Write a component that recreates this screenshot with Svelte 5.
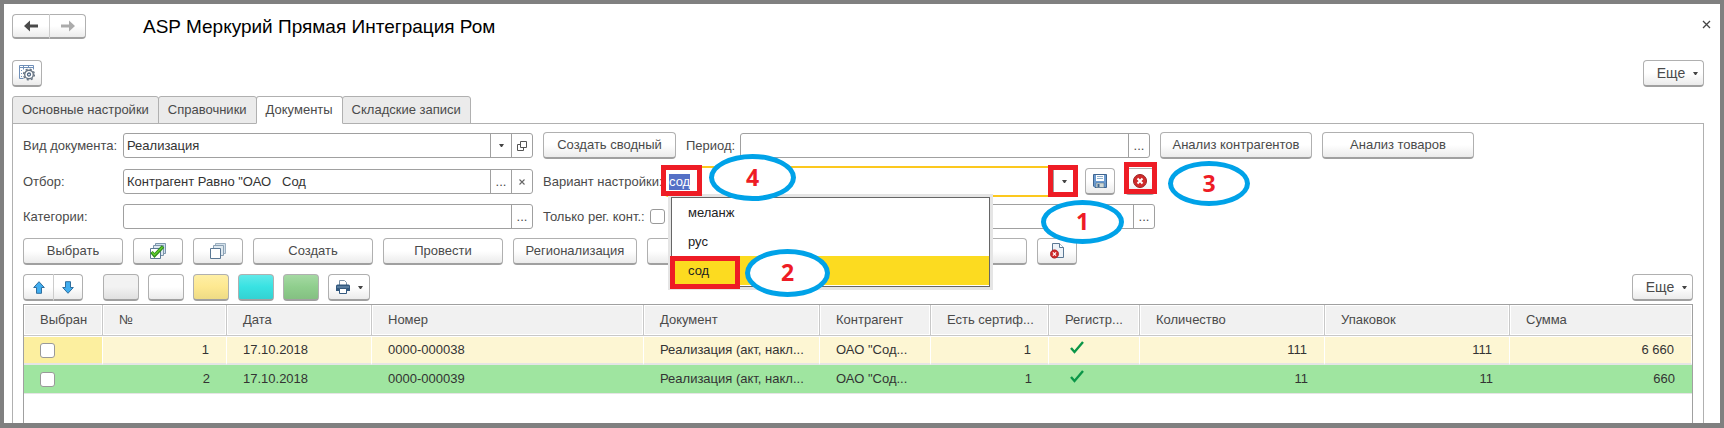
<script lang="ts">
  interface Row {
    no: number;
    date: string;
    number: string;
    doc: string;
    partner: string;
    certs: string;
    qty: string;
    packs: string;
    sum: string;
    color: string;
  }

  interface Mark {
    x: number;
    y: number;
    w: number;
    h: number;
    label?: string;
  }

  const tabs = ['Основные настройки', 'Справочники', 'Документы', 'Складские записи'];
  const variants = ['меланж', 'рус', 'сод'];
  const swatches = ['gray', 'white', 'yellow', 'cyan', 'green'];

  let activeTab = $state<string>('Документы');
  let docType = $state<string>('Реализация');
  let filter = $state<string>('Контрагент Равно "ОАО   Сод');
  let categories = $state<string>('');
  let period = $state<string>('');
  let variant = $state<string>('сод');
  let extra = $state<string>('');
  let popupOpen = $state<boolean>(true);
  let variantInput: HTMLInputElement;

  const rows: Row[] = [
    { no: 1, date: '17.10.2018', number: '0000-000038', doc: 'Реализация (акт, накл...', partner: 'ОАО "Сод...', certs: '1', qty: '111', packs: '111', sum: '6 660', color: 'pale' },
    { no: 2, date: '17.10.2018', number: '0000-000039', doc: 'Реализация (акт, накл...', partner: 'ОАО "Сод...', certs: '1', qty: '11', packs: '11', sum: '660', color: 'green' }
  ];

  // step marks drawn over the form, relative to its top left corner
  const boxes: Mark[] = [
    { x: 638, y: 33, w: 41, h: 31 },
    { x: 1025, y: 33, w: 30, h: 32 },
    { x: 1101, y: 30, w: 33, h: 32 },
    { x: 647, y: 124, w: 70, h: 33 }
  ];
  const bubbles: Mark[] = [
    { x: 1018, y: 68, w: 83, h: 44, label: '1' },
    { x: 722, y: 117, w: 85, h: 48, label: '2' },
    { x: 1145, y: 29, w: 82, h: 45, label: '3' },
    { x: 686, y: 22, w: 87, h: 47, label: '4' }
  ];

  function place(m: Mark): string {
    return `left:${m.x}px;top:${m.y}px;width:${m.w}px;height:${m.h}px`;
  }

  function pick(v: string): void {
    variant = v;
    popupOpen = false;
  }

  $effect(() => {
    variantInput?.focus();
    variantInput?.select();
  });
</script>

{#snippet caret()}
  <svg width="5" height="3" viewBox="0 0 5 3"><path d="M0 0h5L3 3H2z" fill="#444" /></svg>
{/snippet}

{#snippet cross()}
  <g>
    <circle cx="7" cy="7" r="6.5" fill="#cf2a2a" stroke="#9d2222" />
    <path d="M4.5 4.5l5 5M9.5 4.5l-5 5" stroke="#fff" stroke-width="2" />
  </g>
{/snippet}

<div class="window">
  <header class="top">
    <div class="pair">
      <button class="btn" aria-label="Назад">
        <svg width="14" height="12" viewBox="0 0 14 12"><path d="M0 6l6-5.5v4h8v3H6v4z" fill="#4a4a4a" /></svg>
      </button>
      <button class="btn" aria-label="Вперед">
        <svg width="14" height="12" viewBox="0 0 14 12"><path d="M14 6L8 .5v4H0v3h8v4z" fill="#ababab" /></svg>
      </button>
    </div>
    <h1>ASP Меркурий Прямая Интеграция Ром</h1>
    <button class="close" aria-label="Закрыть">
      <svg width="9" height="9" viewBox="0 0 9 9"><path d="M1 1l7 7M8 1L1 8" stroke="#444" stroke-width="1.3" /></svg>
    </button>
  </header>

  <div class="commands">
    <button class="btn icon" aria-label="Настройки">
      <svg width="16" height="16" viewBox="0 0 16 16" fill="none">
        <path d="M4.5 13.5h-4v-13h14v4M.5 2.5h14M4.5.5v4M9.5.5v2M2.5 5v1M2.5 8v1M2.5 11v1" stroke="#6f8fb8" />
        <circle cx="10" cy="9.5" r="4.3" stroke="#687583" stroke-width="1.4" fill="#fff" />
        <circle cx="10" cy="9.5" r="5.4" stroke="#687583" stroke-width="1.4" stroke-dasharray="2.12 2.12" />
        <circle cx="10" cy="9.5" r="1.5" stroke="#4f6682" stroke-width="1.3" />
      </svg>
    </button>
    <button class="btn more">Еще {@render caret()}</button>
  </div>

  <div class="tabs" role="tablist">
    {#each tabs as tab}
      <button class="tab" class:active={tab === activeTab} role="tab" aria-selected={tab === activeTab} onclick={() => (activeTab = tab)}>{tab}</button>
    {/each}
  </div>

  <main class="panel">
    <div class="form">
      <div class="line">
        <label class="first" for="doc-type">Вид документа:</label>
        <div class="field">
          <input id="doc-type" type="text" bind:value={docType} />
          <button aria-label="Выбрать из списка">{@render caret()}</button>
          <button aria-label="Открыть">
            <svg width="10" height="10" viewBox="0 0 10 10" fill="none" stroke="#555"><path d="M3.5 .5h6v6h-6zM3.5 3.5h-3v6h6v-3" /></svg>
          </button>
        </div>
        <button class="btn summary">Создать сводный</button>
        <label class="period" for="period">Период:</label>
        <div class="field">
          <input id="period" type="text" bind:value={period} />
          <button aria-label="Выбрать период">...</button>
        </div>
        <button class="btn analysis">Анализ контрагентов</button>
        <button class="btn analysis">Анализ товаров</button>
      </div>

      <div class="line">
        <label class="first" for="filter">Отбор:</label>
        <div class="field">
          <input id="filter" type="text" bind:value={filter} />
          <button aria-label="Выбрать отбор">...</button>
          <button aria-label="Очистить">
            <svg width="6" height="6" viewBox="0 0 6 6"><path d="M.5 .5l5 5M5.5 .5l-5 5" stroke="#666" stroke-width="1.1" /></svg>
          </button>
        </div>
        <label class="variant" for="variant">Вариант настройки:</label>
        <div class="field combo">
          <input id="variant" type="text" bind:value={variant} bind:this={variantInput} />
          <button aria-label="Показать варианты" onclick={() => (popupOpen = !popupOpen)}>{@render caret()}</button>
          {#if popupOpen}
            <div class="popup" role="listbox" aria-label="Варианты">
              {#each variants as v}
                <button class="option" class:selected={v === variant} role="option" aria-selected={v === variant} onclick={() => pick(v)}>{v}</button>
              {/each}
            </div>
          {/if}
        </div>
        <button class="btn icon" aria-label="Сохранить вариант">
          <svg width="14" height="14" viewBox="0 0 14 14">
            <path d="M.5 .5h13v13H2l-1.5-1.5z" fill="#6b9bd0" stroke="#3f6590" />
            <path d="M3 1h8v6H3z" fill="#fff" />
            <path d="M4 2.5h6M4 4.5h6" stroke="#8fb0cc" />
            <path d="M3 9h8v4.5H3z" fill="#cfd8d4" stroke="#4b6a87" stroke-width=".5" />
            <path d="M4.5 10h2v3h-2z" fill="#3f6590" />
          </svg>
        </button>
        <button class="btn icon" aria-label="Удалить вариант">
          <svg width="14" height="14" viewBox="0 0 14 14">{@render cross()}</svg>
        </button>
      </div>

      <div class="line short">
        <label class="first" for="categories">Категории:</label>
        <div class="field">
          <input id="categories" type="text" bind:value={categories} />
          <button aria-label="Выбрать категории">...</button>
        </div>
        <label class="registered" for="registered">Только рег. конт.:</label>
        <input id="registered" class="check" type="checkbox" />
        <div class="field extra">
          <input type="text" aria-label="Контрагент" bind:value={extra} />
          <button aria-label="Выбрать контрагента">...</button>
        </div>
      </div>

      <div class="marks">
        {#each boxes as box}
          <span class="box" style={place(box)}></span>
        {/each}
        {#each bubbles as bubble}
          <span class="bubble" style={place(bubble)}>{bubble.label}</span>
        {/each}
      </div>
    </div>

    <div class="actions">
      <button class="btn w100">Выбрать</button>
      <button class="btn w50" aria-label="Отметить все">
        <svg width="16" height="16" viewBox="0 0 16 16">
          <path d="M5.5 .5h10v10h-10z" fill="#cfe0ee" stroke="#7c95ab" />
          <path d="M3.5 2.5h10v10h-10z" fill="#dde8f1" stroke="#7c95ab" />
          <path d="M.5 5.5h10v10H.5z" fill="#fff" stroke="#5b7894" />
          <path d="M1.5 9l3 3.5L13 3.5" fill="none" stroke="#2e8b1e" stroke-width="3.4" />
          <path d="M2 9.3l2.5 2.7L12.5 4" fill="none" stroke="#63cf2c" stroke-width="1.4" />
        </svg>
      </button>
      <button class="btn w50" aria-label="Снять отметки">
        <svg width="16" height="16" viewBox="0 0 16 16">
          <path d="M5.5 .5h10v10h-10z" fill="#d3e0ea" stroke="#9db0c0" />
          <path d="M3.5 2.5h10v10h-10z" fill="#dfe9f0" stroke="#8ba1b4" />
          <path d="M.5 5.5h10v10H.5z" fill="#fff" stroke="#5b7894" />
        </svg>
      </button>
      <button class="btn w120">Создать</button>
      <button class="btn w120">Провести</button>
      <button class="btn regional">Регионализация</button>
      <button class="btn wide" aria-label="Обработать"></button>
      <button class="btn w40" aria-label="Удалить документ">
        <svg width="15" height="16" viewBox="0 0 15 16">
          <path d="M2.5 .5h7l4 4v10h-11z" fill="#eef3f8" stroke="#5b7894" />
          <path d="M9.5 .5v4h4" fill="#fff" stroke="#5b7894" />
          <g transform="translate(0 6.5) scale(.64)">{@render cross()}</g>
        </svg>
      </button>
    </div>

    <div class="toolbar">
      <div class="pair move">
        <button class="btn" aria-label="Вверх">
          <svg width="12" height="13" viewBox="0 0 12 13"><path d="M6 .7l5.3 5.8H8.5v5.8h-5V6.5H.7z" fill="#41aef0" stroke="#2f6f9f" /></svg>
        </button>
        <button class="btn" aria-label="Вниз">
          <svg width="12" height="13" viewBox="0 0 12 13"><path d="M6 12.3L.7 6.5h2.8V.7h5v5.8h2.8z" fill="#41aef0" stroke="#2f6f9f" /></svg>
        </button>
      </div>
      {#each swatches as color}
        <button class="btn swatch {color}" aria-label="Цвет"></button>
      {/each}
      <button class="btn print" aria-label="Печать">
        <svg width="14" height="14" viewBox="0 0 14 14">
          <path d="M3.5 5.5v-5h5l2 2v3" fill="#fff" stroke="#7d93a8" />
          <path d="M0 6q0-1.5 1.5-1.5h11Q14 4.5 14 6v5H0z" fill="#33597f" />
          <path d="M1 7h12" stroke="#7fa0bf" />
          <path d="M3.5 8.5h7v5h-7z" fill="#fff" stroke="#33597f" />
        </svg>
        {@render caret()}
      </button>
      <button class="btn more">Еще {@render caret()}</button>
    </div>

    <div class="grid">
      <table>
        <colgroup>
          <col class="c-pick" /><col class="c-no" /><col class="c-date" /><col class="c-number" /><col class="c-doc" />
          <col class="c-partner" /><col class="c-certs" /><col class="c-reg" /><col class="c-total" /><col class="c-total" /><col />
        </colgroup>
        <thead>
          <tr>
            <th>Выбран</th>
            <th>№</th>
            <th>Дата</th>
            <th>Номер</th>
            <th>Документ</th>
            <th>Контрагент</th>
            <th>Есть сертиф...</th>
            <th>Регистр...</th>
            <th>Количество</th>
            <th>Упаковок</th>
            <th>Сумма</th>
          </tr>
        </thead>
        <tbody>
          {#each rows as row}
            <tr class={row.color}>
              <td><input class="check" type="checkbox" aria-label="Выбран {row.no}" /></td>
              <td class="num">{row.no}</td>
              <td>{row.date}</td>
              <td>{row.number}</td>
              <td>{row.doc}</td>
              <td>{row.partner}</td>
              <td class="num">{row.certs}</td>
              <td>
                <svg class="tick" width="14" height="13" viewBox="0 0 14 13"><path d="M1 7l3.5 4L13 1" fill="none" stroke="#0a9648" stroke-width="2.4" /></svg>
              </td>
              <td class="num">{row.qty}</td>
              <td class="num">{row.packs}</td>
              <td class="num">{row.sum}</td>
            </tr>
          {/each}
        </tbody>
      </table>
    </div>
  </main>
</div>

<style>
  :global(body) {
    background: #fff;
  }

  .window,
  .window * {
    box-sizing: border-box;
  }

  .window {
    display: flex;
    flex-direction: column;
    min-height: 100vh;
    padding: 10px 16px 0 8px;
    border: 4px solid #808080;
    border-bottom-width: 5px;
    background: #fff;
    color: #4a4a4a;
    font-family: "Liberation Sans", Arial, sans-serif;
    font-size: 13px;
    line-height: 16px;
  }

  button,
  input {
    margin: 0;
    font: inherit;
    color: inherit;
  }

  svg {
    display: block;
    flex: none;
  }

  .btn {
    display: flex;
    align-items: center;
    justify-content: center;
    height: 27px;
    padding: 0;
    border: 1px solid #b0b0b0;
    border-bottom: 2px solid #a0a0a0;
    border-radius: 4px;
    background: linear-gradient(#fff 50%, #ebebeb);
    white-space: nowrap;
    flex: none;
  }

  .pair {
    display: flex;
  }

  .pair .btn {
    width: 37px;
    height: 25px;
  }

  .pair .btn:first-child {
    border-right: none;
    border-radius: 4px 0 0 4px;
  }

  .pair .btn:last-child {
    border-left-color: #ccc;
    border-radius: 0 4px 4px 0;
  }

  .pair.move .btn {
    width: 30px;
    height: 27px;
  }

  .move {
    margin-right: 11px;
  }

  .top {
    display: flex;
    align-items: center;
    height: 25px;
  }

  h1 {
    margin: 0 0 0 57px;
    color: #000;
    font-size: 19px;
    font-weight: normal;
    line-height: 24px;
  }

  .close {
    margin-left: auto;
    margin-right: -7px;
    padding: 0 0 5px;
    border: none;
    background: none;
  }

  .commands {
    display: flex;
    justify-content: space-between;
    margin-top: 21px;
  }

  .icon {
    width: 30px;
  }

  .more {
    gap: 8px;
    width: 61px;
    padding-left: 8px;
    font-size: 14px;
  }

  .tabs {
    display: flex;
    margin-top: 9px;
  }

  .tab {
    height: 28px;
    margin: 0 0 -1px -1px;
    padding: 0 9px;
    border: 1px solid #b0b0b0;
    border-radius: 3px 3px 0 0;
    background: #ebebeb;
  }

  .tab:first-child {
    margin-left: 0;
  }

  .tab.active {
    border-bottom-color: #fff;
    background: #fff;
    z-index: 1;
  }

  .panel {
    display: flex;
    flex: 1;
    flex-direction: column;
    padding: 8px 10px 0;
    border: 1px solid #b0b0b0;
    border-bottom: none;
  }

  .form {
    position: relative;
    display: flex;
    flex-direction: column;
    gap: 9px;
  }

  .line {
    display: flex;
    align-items: center;
    gap: 10px;
    height: 27px;
  }

  .line.short {
    height: 25px;
  }

  label {
    flex: none;
    white-space: nowrap;
  }

  .first {
    width: 90px;
  }

  .summary {
    width: 133px;
  }

  .period {
    width: 44px;
  }

  .analysis {
    width: 152px;
  }

  .variant {
    width: 112px;
  }

  .registered {
    width: 97px;
  }

  .field {
    display: flex;
    width: 410px;
    height: 25px;
    border: 1px solid #a0a0a0;
    border-radius: 3px;
    background: #fff;
    flex: none;
  }

  .field input {
    flex: 1;
    min-width: 0;
    padding: 0 3px;
    border: none;
    outline: none;
    background: none;
    color: #333;
  }

  .field > button {
    display: flex;
    align-items: center;
    justify-content: center;
    width: 21px;
    padding: 0;
    border: none;
    border-left: 1px solid #a0a0a0;
    background: none;
  }

  .combo {
    position: relative;
    height: 27px;
    border-color: #fff;
    outline: 2px solid #fcc81e;
  }

  .combo input::selection {
    background: #5470c6;
    color: #fff;
  }

  .extra {
    width: 435px;
    margin-left: 45px;
  }

  .popup {
    position: absolute;
    top: 28px;
    left: 5px;
    width: 319px;
    padding-bottom: 1px;
    border: 1px solid #666;
    background: #fff;
    box-shadow: 0 0 0 3px #e5e5e5;
  }

  .option {
    display: block;
    width: 100%;
    height: 29px;
    padding: 0 16px;
    border: none;
    background: none;
    color: #222;
    text-align: left;
  }

  .option.selected {
    background: #fcdb20;
  }

  .marks {
    position: absolute;
    top: 0;
    left: 0;
    pointer-events: none;
  }

  .box {
    position: absolute;
    border: 5px solid #ee1c25;
  }

  .bubble {
    position: absolute;
    display: flex;
    align-items: center;
    justify-content: center;
    padding-bottom: 2px;
    border: 5px solid #00a2e8;
    border-radius: 50%;
    background: #fff;
    color: #ee1c25;
    font-family: "Open Sans", "Noto Sans", sans-serif;
    font-size: 23px;
    font-weight: bold;
    line-height: 24px;
  }

  .check {
    appearance: none;
    display: block;
    width: 15px;
    height: 15px;
    border: 1px solid #999;
    border-radius: 3px;
    background: #fff;
    flex: none;
  }

  .actions {
    display: flex;
    gap: 10px;
    margin-top: 9px;
  }

  .w40 {
    width: 40px;
  }

  .w50 {
    width: 50px;
  }

  .w100 {
    width: 100px;
  }

  .w120 {
    width: 120px;
  }

  .regional {
    width: 124px;
  }

  .wide {
    width: 380px;
  }

  .toolbar {
    display: flex;
    gap: 9px;
    margin-top: 9px;
  }

  .toolbar .more {
    margin-left: auto;
  }

  .swatch {
    width: 36px;
  }

  .gray {
    background: linear-gradient(#f2f2f2 50%, #e0e0e0);
  }

  .yellow {
    background: linear-gradient(#feefa5, #fde890 50%, #eedb85);
  }

  .cyan {
    background: linear-gradient(#62e9e9, #38e2e2 50%, #34d2d2);
  }

  .green.swatch {
    background: linear-gradient(#a5d9a3, #8fce8d 50%, #84c082);
  }

  .print {
    gap: 8px;
    width: 42px;
  }

  .grid {
    flex: 1;
    margin-top: 3px;
    border: 1px solid #a0a0a0;
    border-bottom: none;
  }

  table {
    width: 100%;
    border-collapse: separate;
    border-spacing: 0;
    table-layout: fixed;
  }

  .c-pick {
    width: 79px;
  }

  .c-no {
    width: 124px;
  }

  .c-date {
    width: 145px;
  }

  .c-number {
    width: 272px;
  }

  .c-doc {
    width: 176px;
  }

  .c-partner {
    width: 111px;
  }

  .c-certs {
    width: 118px;
  }

  .c-reg {
    width: 91px;
  }

  .c-total {
    width: 185px;
  }

  th,
  td {
    overflow: hidden;
    white-space: nowrap;
    text-align: left;
  }

  th {
    height: 31px;
    padding: 0 0 1px 16px;
    border-right: 1px solid #c8c8c8;
    border-bottom: 1px solid #c8c8c8;
    background: #f1f1f1;
    box-shadow: inset 0 0 0 1px #fff;
    font-weight: normal;
  }

  td {
    height: 29px;
    padding: 0 17px 0 16px;
    border-bottom: 2px solid #e5e5e5;
    color: #333;
  }

  th:last-child {
    border-right: none;
  }

  .pale td {
    border-top: 1px solid #fff;
    border-right: 1px solid #fff;
    background: #fdf6d3;
  }

  .pale td:first-child {
    background: #fcef9f;
  }

  .green td {
    border-bottom-width: 1px;
    background: #9fe5a0;
  }

  .num {
    text-align: right;
  }

  .tick {
    margin: 0 0 5px 5px;
  }
</style>
